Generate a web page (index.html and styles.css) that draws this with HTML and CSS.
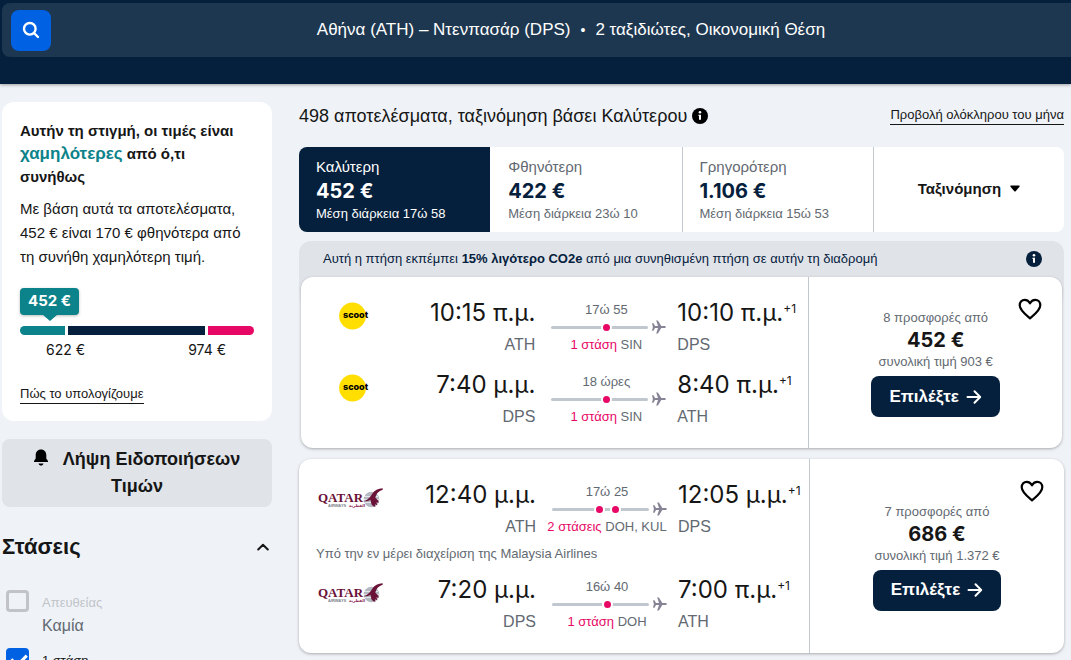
FILE: index.html
```html
<!DOCTYPE html>
<html lang="el">
<head>
<meta charset="utf-8">
<meta name="viewport" content="width=device-width, initial-scale=1">
<title>Αθήνα – Ντενπασάρ</title>
<link rel="stylesheet" href="styles.css">
</head>
<body>
<svg class="defs" aria-hidden="true">
  <symbol id="plane" viewBox="0 0 14 14"><path d="M0 3.200h1.500L3 5.900h3L4.200.4h1.700l3.400 5.500h3c2 0 2 2.200 0 2.200h-3l-3.400 5.500H4.200L6 8.100H3l-1.500 2.700H0l.9-3.800z"/></symbol>
  <symbol id="heart" viewBox="0 0 24 22"><path d="M12 20.300C8 17 1.700 12.400 1.700 7.300 1.700 4 4 1.800 6.700 1.800c2.300 0 4.200 1.300 5.300 3.600 1.100-2.300 3-3.600 5.300-3.600 2.700 0 5 2.200 5 5.500 0 5.100-6.300 9.700-10.300 13z" fill="none" stroke="currentColor" stroke-width="2.200" stroke-linejoin="round"/></symbol>
  <symbol id="arrow" viewBox="0 0 16 16"><path d="M1.500 8h12.500M8.500 2.300 14.200 8l-5.700 5.700" fill="none" stroke="currentColor" stroke-width="2" stroke-linecap="round" stroke-linejoin="round"/></symbol>
  <symbol id="info" viewBox="0 0 16 16"><circle cx="8" cy="8" r="8"/><circle cx="8" cy="4.300" r="1.300" fill="#fff"/><path d="M6.500 6.700H9v5h-2V8h-.5z" fill="#fff"/></symbol>
  <symbol id="oryx" viewBox="0 0 20 20">
    <circle cx="8.500" cy="11.500" r="7.800" fill="#b4b8c1"/>
    <path d="M1 8.500h14M1 11.500h15M2 14.500h13" stroke="#e4e6ea" stroke-width="1"/>
    <path d="M19.700.3C15 .6 11.500 2.200 9.600 5.200 8 7.700 7 9.500 4.600 11.300c-1.200.9-2.500 1.500-3.900 2 2.700.2 4.900-.3 6.600-1.500.9 1.700.6 3.300 1.500 4.900.8 1.300 2.200 1.800 3.600 2.100l-.5-2.500 2.500.9-1-2.700 2.300.3c-.2-2.600-2-4-3.400-5.100C13 6 15.500 3 19.700 1.700z" fill="#6a1238"/>
  </symbol>
</svg>

<header class="top">
  <div class="search-bar">
    <button class="search-btn" aria-label="Αναζήτηση"><svg viewBox="0 0 18 18" width="18" height="18"><circle cx="7.800" cy="7.800" r="5.800"/><path d="m12 12 4 4"/></svg></button>
    <p class="route">Αθήνα (ATH) – Ντενπασάρ (DPS)<span class="sep">•</span>2 ταξιδιώτες, Οικονομική Θέση</p>
  </div>
</header>

<div class="page">
  <aside class="side">
    <section class="insight">
      <h2>Αυτήν τη στιγμή, οι τιμές είναι <em>χαμηλότερες</em> από ό,τι συνήθως</h2>
      <p>Με βάση αυτά τα αποτελέσματα, 452 € είναι 170 € φθηνότερα από τη συνήθη χαμηλότερη τιμή.</p>
      <span class="bubble">452 €</span>
      <div class="scale"><i class="low"></i><i class="mid"></i><i class="high"></i></div>
      <div class="marks"><span>622 €</span><span>974 €</span></div>
      <a href="#how">Πώς το υπολογίζουμε</a>
    </section>
    <button class="alerts"><svg viewBox="0 0 14 17" width="14" height="17"><path d="M7 .5c3.400 0 5.300 2.500 5.300 5.500v3.500L14 12v1H0v-1l1.700-2.500V6C1.700 3 3.600.5 7 .5zM4.500 14.500h5C9 16 8.200 16.500 7 16.500s-2-.5-2.500-2z"/></svg>Λήψη Ειδοποιήσεων Τιμών</button>
    <section class="filter">
      <button class="filter-head"><span>Στάσεις</span><svg viewBox="0 0 12 8" width="12" height="8"><path d="M1.200 6.500 6 1.700l4.800 4.800"/></svg></button>
      <label class="opt off"><input type="checkbox" disabled><span>Απευθείας<small>Καμία</small></span></label>
      <label class="opt"><input type="checkbox" checked><span>1 στάση</span></label>
    </section>
  </aside>

  <main class="results">
    <div class="summary">
      <h1>498 αποτελέσματα, ταξινόμηση βάσει Καλύτερου <svg width="16" height="16"><use href="#info"/></svg></h1>
      <a href="#month">Προβολή ολόκληρου του μήνα</a>
    </div>
    <div class="tabs">
      <button class="tab on"><span>Καλύτερη</span><b>452 €</b><small>Μέση διάρκεια 17ώ 58</small></button>
      <button class="tab"><span>Φθηνότερη</span><b>422 €</b><small>Μέση διάρκεια 23ώ 10</small></button>
      <button class="tab"><span>Γρηγορότερη</span><b>1.106 €</b><small>Μέση διάρκεια 15ώ 53</small></button>
      <button class="tab sort">Ταξινόμηση<svg viewBox="0 0 10 7" width="10" height="7"><path d="M1 .5h8c.8 0 1 .6.500 1.200L5.700 6.200c-.4.500-1 .5-1.400 0L.5 1.700C0 1.100.2.500 1 .5z"/></svg></button>
    </div>

    <div class="eco">
      <div class="eco-note"><p>Αυτή η πτήση εκπέμπει <b>15% λιγότερο CO2e</b> από μια συνηθισμένη πτήση σε αυτήν τη διαδρομή</p><svg width="16" height="16"><use href="#info"/></svg></div>
      <article class="ticket">
        <div class="legs">
          <div class="leg">
            <svg class="logo scoot" viewBox="0 0 34 28"><circle cx="13.500" cy="14" r="13.400"/><text x="4" y="16">scoot</text></svg>
            <div class="dep"><time>10:15 π.μ.</time><span>ATH</span></div>
            <div class="mid-col"><span>17ώ 55</span><div class="track"><span class="dots"><i></i></span><svg width="14" height="14"><use href="#plane"/></svg></div><span><em>1 στάση</em> SIN</span></div>
            <div class="arr"><time>10:10 π.μ.<sup>+1</sup></time><span>DPS</span></div>
          </div>
          <div class="leg">
            <svg class="logo scoot" viewBox="0 0 34 28"><circle cx="13.500" cy="14" r="13.400"/><text x="4" y="16">scoot</text></svg>
            <div class="dep"><time>7:40 μ.μ.</time><span>DPS</span></div>
            <div class="mid-col"><span>18 ώρες</span><div class="track"><span class="dots"><i></i></span><svg width="14" height="14"><use href="#plane"/></svg></div><span><em>1 στάση</em> SIN</span></div>
            <div class="arr"><time>8:40 π.μ.<sup>+1</sup></time><span>ATH</span></div>
          </div>
        </div>
        <div class="offer">
          <button class="save" aria-label="Αποθήκευση"><svg width="24" height="22"><use href="#heart"/></svg></button>
          <span>8 προσφορές από</span><b>452 €</b><span>συνολική τιμή 903 €</span>
          <button class="select">Επιλέξτε<svg width="16" height="16"><use href="#arrow"/></svg></button>
        </div>
      </article>
    </div>

    <article class="ticket">
      <div class="legs">
        <div class="leg">
          <svg class="logo qatar" viewBox="0 0 68 24"><use href="#oryx" x="47" y="1" width="20" height="20"/><text x="2" y="15">QATAR</text><text class="sub" x="12" y="20">AIRWAYS</text><text class="sub arabic" x="33" y="20">القطرية</text></svg>
          <div class="dep"><time>12:40 μ.μ.</time><span>ATH</span></div>
          <div class="mid-col"><span>17ώ 25</span><div class="track"><span class="dots"><i></i><i></i></span><svg width="14" height="14"><use href="#plane"/></svg></div><span><em>2 στάσεις</em> DOH, KUL</span></div>
          <div class="arr"><time>12:05 μ.μ.<sup>+1</sup></time><span>DPS</span></div>
        </div>
        <p class="operated">Υπό την εν μέρει διαχείριση της Malaysia Airlines</p>
        <div class="leg">
          <svg class="logo qatar" viewBox="0 0 68 24"><use href="#oryx" x="47" y="1" width="20" height="20"/><text x="2" y="15">QATAR</text><text class="sub" x="12" y="20">AIRWAYS</text><text class="sub arabic" x="33" y="20">القطرية</text></svg>
          <div class="dep"><time>7:20 μ.μ.</time><span>DPS</span></div>
          <div class="mid-col"><span>16ώ 40</span><div class="track"><span class="dots"><i></i></span><svg width="14" height="14"><use href="#plane"/></svg></div><span><em>1 στάση</em> DOH</span></div>
          <div class="arr"><time>7:00 π.μ.<sup>+1</sup></time><span>ATH</span></div>
        </div>
      </div>
      <div class="offer">
        <button class="save" aria-label="Αποθήκευση"><svg width="24" height="22"><use href="#heart"/></svg></button>
        <span>7 προσφορές από</span><b>686 €</b><span>συνολική τιμή 1.372 €</span>
        <button class="select">Επιλέξτε<svg width="16" height="16"><use href="#arrow"/></svg></button>
      </div>
    </article>
  </main>
</div>
</body>
</html>
```
FILE: styles.css
```css
:root {
  --ink: #161616;
  --grey: #626971;
  --navy: #05203c;
  --pink: #e70866;
  --teal: #0c838a;
  --line: #c1c7cf;
  --pale: #e0e4e9;
  --num: Inter, "Liberation Sans", sans-serif;
}

* { box-sizing: border-box; }

body {
  margin: 0;
  background: #eff3f8;
  color: var(--ink);
  font: 15px/24px "Liberation Sans", Arial, sans-serif;
  overflow: hidden;
  height: 100vh;
}

h1, h2, p { margin: 0; }
em { font-style: normal; }
svg { display: block; flex: none; }
button { font: inherit; color: inherit; border: 0; padding: 0; background: none; cursor: pointer; }
a { color: var(--ink); font-size: 13px; line-height: 18px; text-decoration: none; border-bottom: 1px solid var(--ink); }
.defs { position: absolute; width: 0; height: 0; }

/* Header */
.top { background: var(--navy); padding: 3px 0 27px 2px; box-shadow: 0 1px 3px rgba(37, 32, 31, .4); }
.search-bar {
  display: grid;
  grid-template-columns: 40px 1fr;
  gap: 29px;
  align-items: center;
  height: 54px;
  padding: 0 9px;
  background: #1e3750;
  border-radius: 8px 0 0 8px;
}
.search-btn { display: grid; place-items: center; height: 41px; border-radius: 8px; background: #0062e3; }
.search-btn svg { fill: none; stroke: #fff; stroke-width: 2.4; stroke-linecap: round; }
.route { color: #fff; font-size: 17px; text-align: center; }
.sep { margin: 0 10px; font-size: 14px; }

.page { display: grid; grid-template-columns: 270px 1fr; gap: 27px; padding: 18px 7px 0 2px; }

/* Sidebar */
.insight { background: #fff; border-radius: 12px; padding: 17px 18px 16px; }
.insight h2 { padding-right: 12px; font-size: 15px; line-height: 23px; margin-bottom: 9px; }
.insight h2 em { color: var(--teal); font-size: 17px; }
.bubble {
  position: relative;
  display: block;
  width: max-content;
  margin-top: 19px;
  padding: 1px 8px 2px;
  background: var(--teal);
  color: #fff;
  border-radius: 4px;
  font: 700 15px/24px var(--num);
  box-shadow: 0 1px 3px rgba(37, 32, 31, .3);
}
.bubble::after {
  content: "";
  position: absolute;
  top: 100%;
  left: 50%;
  margin-left: -7px;
  border: 7px solid transparent;
  border-top: 6px solid var(--teal);
  border-bottom: 0;
}
.scale { display: grid; grid-template-columns: 45fr 137fr 46fr; gap: 3px; height: 9px; margin-top: 11px; }
.low { background: var(--teal); border-radius: 5px 0 0 5px; }
.mid { background: var(--navy); }
.high { background: var(--pink); border-radius: 0 5px 5px 0; }
.marks { display: flex; justify-content: space-between; padding: 3px 28px 0 26px; margin-bottom: 19px; font: 14px/24px var(--num); }
.insight a { display: inline-block; }

.alerts {
  width: 100%;
  margin-top: 18px;
  padding: 7px 30px;
  border-radius: 8px;
  background: var(--pale);
  font-size: 18px;
  font-weight: 700;
  line-height: 27px;
  text-align: center;
}
.alerts svg { display: inline-block; margin-right: 15px; vertical-align: -1px; }

.filter-head { display: flex; justify-content: space-between; align-items: center; width: 100%; margin-top: 26px; padding-right: 3px; font-size: 22px; font-weight: 700; line-height: 28px; }
.filter-head svg { fill: none; stroke: var(--ink); stroke-width: 2; stroke-linecap: round; stroke-linejoin: round; }
.opt { display: flex; gap: 13px; margin-top: 29px; padding-left: 4px; font-size: 13px; line-height: 24px; }
.opt + .opt { margin-top: 11px; }
.opt span { padding-top: 1px; }
.opt small { display: block; font-size: 16px; line-height: 22px; color: var(--grey); }
.off { color: #c1c3c8; }
.opt input {
  appearance: none;
  width: 23px;
  height: 22px;
  margin: 0;
  border: 3px solid #c1c3c8;
  border-radius: 4px;
}
.opt input:checked { border: 0; background: #0062e3; }
.opt input:checked::after {
  content: "";
  display: block;
  width: 7px;
  height: 12px;
  margin: 3px 0 0 8px;
  border: solid #fff;
  border-width: 0 3px 3px 0;
  transform: rotate(45deg);
}

/* Results */
.summary { display: flex; justify-content: space-between; align-items: center; height: 27px; }
.summary h1 { display: flex; align-items: center; gap: 5px; font-size: 18px; font-weight: 400; }
.summary svg { fill: #000; }

.tabs { display: grid; grid-template-columns: repeat(4, 1fr); margin-top: 18px; background: #fff; border-radius: 8px; overflow: hidden; }
.tab { display: flex; flex-direction: column; padding: 8px 17px 7px; text-align: left; color: var(--grey); border-left: 1px solid var(--line); }
.tab.on + .tab { border-left-color: transparent; }
.tab:first-child { border-left: 0; }
.tab b { color: var(--navy); font: 700 20px/24px var(--num); }
.tab small { font-size: 13px; line-height: 22px; white-space: nowrap; }
.tab.on { background: var(--navy); color: #fff; }
.tab.on b { color: #fff; }
.tab.sort { flex-direction: row; align-items: center; justify-content: center; gap: 9px; padding-bottom: 10px; color: var(--ink); font-weight: 700; }

.eco { margin-top: 9px; padding: 0 2px; border-radius: 12px; background: linear-gradient(var(--pale) 40px, transparent 64px); }
.eco-note { display: flex; justify-content: space-between; align-items: center; height: 36px; padding: 0 20px 0 22px; color: var(--navy); font-size: 13px; }
.eco-note svg { fill: var(--navy); }

.ticket { display: grid; grid-template-columns: 2fr 1fr; background: #fff; border-radius: 12px; box-shadow: 0 1px 3px rgba(37, 32, 31, .35); }
.eco + .ticket { margin-top: 11px; }
.legs { padding: 20px 0 19px 17px; }
.leg { display: grid; grid-template-columns: 68px 1fr 122px 141px; }
.leg + .leg { margin-top: 12px; }
.logo.scoot { width: 34px; height: 28px; margin: 5px 0 0 21px; }
.scoot circle { fill: #ffde00; }
.scoot text { font: 800 9px Inter, sans-serif; fill: #000; }
.logo.qatar { width: 68px; height: 24px; margin-top: 8px; }
.qatar text { font: 700 13px "Liberation Serif", serif; fill: #6a1238; }
.qatar .sub { font: 700 4px "Liberation Sans", sans-serif; fill: #7d828c; }
.qatar .arabic { font-family: "DejaVu Sans", sans-serif; fill: #8e2450; }
.dep, .arr { display: flex; flex-direction: column; padding: 0 10px; font-size: 16px; color: var(--grey); white-space: nowrap; }
.dep { text-align: right; }
.leg time { color: var(--ink); font: 24px/32px var(--num); margin-bottom: 4px; }
.leg sup { font-size: 12px; line-height: 12px; vertical-align: 8px; }
.mid-col { display: flex; flex-direction: column; align-items: center; padding-top: 3px; font-size: 13px; line-height: 20px; color: var(--grey); white-space: nowrap; }
.mid-col em { color: var(--pink); }
.track { position: relative; display: flex; align-items: center; gap: 4px; width: 100%; height: 14px; padding: 0 1px 0 6px; }
.track::before { content: ""; flex: 1; height: 3px; border-radius: 2px; background: var(--line); }
.track svg { fill: #868494; }
.dots { position: absolute; inset: 0; display: flex; justify-content: center; align-items: center; gap: 5px; }
.dots i { width: 11px; height: 11px; border: 2px solid #fff; border-radius: 50%; background: var(--pink); }
.mid-col .track + span { margin-top: 1px; }
.operated { margin: 5px 0 10px; font-size: 13px; line-height: 20px; color: var(--grey); }

.offer { position: relative; display: flex; flex-direction: column; align-items: center; justify-content: center; border-left: 1px solid var(--line); color: var(--grey); font-size: 13px; line-height: 20px; }
.offer b { color: var(--ink); font: 700 20px/24px var(--num); }
.save { position: absolute; top: 21px; right: 20px; color: #000; }
.select { display: flex; align-items: center; gap: 7px; margin-top: 4px; padding: 0 18px; height: 41px; border-radius: 8px; background: var(--navy); color: #fff; font-size: 17px; font-weight: 700; }
```
